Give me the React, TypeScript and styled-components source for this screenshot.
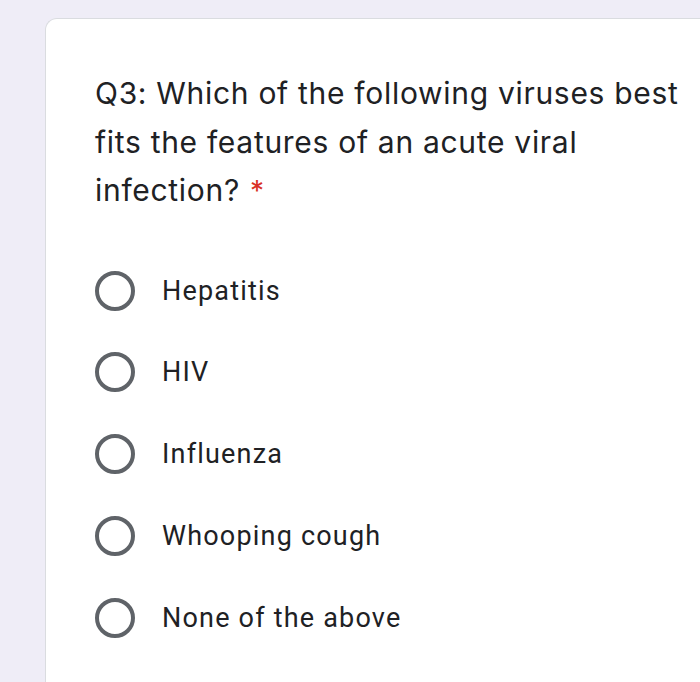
import styled, { createGlobalStyle } from "styled-components";

const GlobalStyle = createGlobalStyle`
  html, body {
    margin: 0;
    padding: 0;
    background: #efedf7;
  }
  body {
    width: 700px;
    height: 682px;
    overflow: hidden;
  }
`;

const Page = styled.div`
  padding: 18px 0 0 45px;
  height: 682px;
  box-sizing: border-box;
`;

const Card = styled.div`
  background: #ffffff;
  border: 1.5px solid #dadce0;
  border-right: none;
  border-bottom: none;
  border-radius: 12px 0 0 0;
  height: 100%;
  box-sizing: border-box;
  padding: 50px 0 0 49px;
`;

const Question = styled.div`
  font-family: Inter, "Open Sans", "Liberation Sans", sans-serif;
  font-size: 30px;
  line-height: 48.5px;
  letter-spacing: 0.7px;
  color: #202124;
  white-space: nowrap;
`;

const Required = styled.span`
  color: #d93025;
  margin-left: 10px;
  font-size: 28px;
`;

const Options = styled.div`
  display: flex;
  flex-direction: column;
  gap: 41.75px;
  margin-top: 55px;
`;

const Option = styled.label`
  display: flex;
  align-items: center;
  gap: 27px;
  height: 40px;
`;

const Radio = styled.span`
  width: 40px;
  height: 40px;
  border-radius: 50%;
  border: 4px solid #5f6368;
  box-sizing: border-box;
  flex: none;
`;

const OptionText = styled.span`
  font-family: Roboto, "Liberation Sans", sans-serif;
  font-size: 27px;
  letter-spacing: 1.2px;
  color: #202124;
`;

const choices = [
  "Hepatitis",
  "HIV",
  "Influenza",
  "Whooping cough",
  "None of the above",
];

export default function App() {
  return (
    <>
      <GlobalStyle />
      <Page>
        <Card>
          <Question>
            Q3: Which of the following viruses best
            <br />
            fits the features of an acute viral
            <br />
            infection?
            <Required>*</Required>
          </Question>
          <Options>
            {choices.map((c) => (
              <Option key={c}>
                <Radio />
                <OptionText>{c}</OptionText>
              </Option>
            ))}
          </Options>
        </Card>
      </Page>
    </>
  );
}
